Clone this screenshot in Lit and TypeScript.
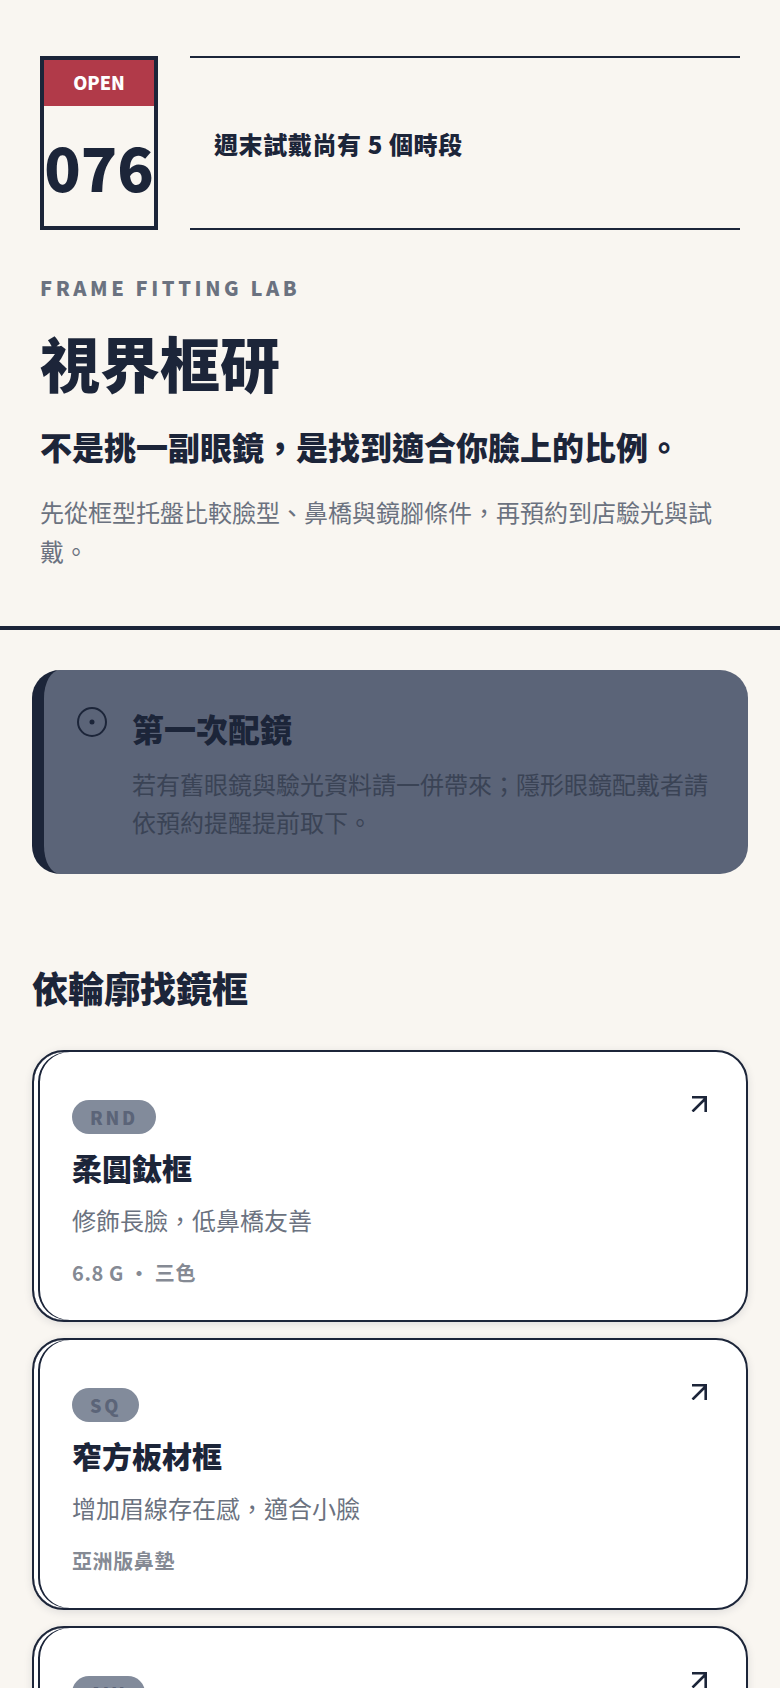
import { LitElement, html, css, svg } from "lit";
import { customElement } from "lit/decorators.js";

const frames = [
  { code: "RND", name: "柔圓鈦框", desc: "修飾長臉，低鼻橋友善", meta: "6.8 G ・ 三色" },
  { code: "SQ", name: "窄方板材框", desc: "增加眉線存在感，適合小臉", meta: "亞洲版鼻墊" },
  { code: "AVI", name: "飛行員細框", desc: "拉寬上庭比例，適合菱形臉", meta: "可調鼻托" },
];

const arrow = svg`<path d="M1.5 15.5 L14.5 2.5 M1 1.3 H14.7 V16" />`;

@customElement("app-root")
export class AppRoot extends LitElement {
  static styles = css`
    :host {
      display: block;
      height: 1688px;
      overflow: hidden;
      background: #f9f6f1;
      color: #1c2539;
      font-family: "Noto Sans CJK TC", "Noto Sans", sans-serif;
    }
    .hero {
      padding: 56px 40px 56px;
      border-bottom: 4px solid #1c2539;
    }
    .top {
      display: flex;
      gap: 32px;
      margin-bottom: 44px;
    }
    .ticket {
      flex: none;
      box-sizing: border-box;
      width: 118px;
      height: 174px;
      border: 4px solid #1c2539;
      display: flex;
      flex-direction: column;
    }
    .open {
      box-sizing: border-box;
      background: #b13a49;
      color: #fff;
      height: 46px;
      padding-bottom: 2px;
      display: flex;
      align-items: center;
      justify-content: center;
      font-size: 18px;
      font-weight: 900;
    }
    .num {
      flex: 1;
      display: flex;
      align-items: center;
      justify-content: center;
      font-size: 60px;
      font-weight: 900;
      line-height: 1;
    }
    .status {
      flex: 1;
      border-top: 2px solid #1c2539;
      border-bottom: 2px solid #1c2539;
      display: flex;
      align-items: center;
      padding: 0 24px;
      font-size: 24px;
      font-weight: 900;
      letter-spacing: 0.6px;
    }
    .eyebrow {
      font-size: 20px;
      font-weight: 900;
      letter-spacing: 3.6px;
      line-height: 28px;
      color: #6b7280;
    }
    h1 {
      margin: 20px 0 0;
      font-size: 60px;
      line-height: 80px;
      font-weight: 900;
    }
    h2 {
      margin: 22px 0 0;
      font-size: 32px;
      line-height: 44px;
      font-weight: 900;
    }
    .lead {
      margin: 24px 0 0;
      font-size: 24px;
      line-height: 39px;
      color: #6b7280;
    }
    main {
      padding: 40px 32px;
    }
    .notice {
      display: flex;
      gap: 24px;
      padding: 32px 36px 32px 32px;
      background: #5b6478;
      border-left: 12px solid #1c2539;
      border-radius: 28px;
    }
    .notice svg {
      flex: none;
      width: 32px;
      height: 32px;
      margin-top: 4px;
      fill: none;
      stroke: #1c2539;
      stroke-width: 2;
    }
    .notice h3 {
      margin: 2px 0 13px;
      font-size: 32px;
      line-height: 48px;
      font-weight: 900;
    }
    .notice p {
      margin: 0;
      font-size: 24px;
      line-height: 38.4px;
      color: #3a4355;
    }
    .section-title {
      margin: 87px 0 37px;
      font-size: 36px;
      line-height: 52px;
      font-weight: 900;
    }
    .cards {
      display: flex;
      flex-direction: column;
      gap: 16px;
    }
    .card {
      position: relative;
      box-sizing: border-box;
      height: 272px;
      padding: 48px 38px 0;
      background: #fff;
      border: 2px solid #1c2539;
      border-radius: 32px;
      box-shadow: inset 4px 0 0 #fff, inset 6px 0 0 #1c2539,
        0 2px 8px rgba(28, 37, 57, 0.12);
    }
    .badge {
      display: inline-block;
      height: 34px;
      line-height: 34px;
      padding: 0 18px;
      border-radius: 17px;
      background: #828b9b;
      color: #5b6478;
      font-size: 18px;
      font-weight: 900;
      letter-spacing: 2.7px;
      vertical-align: top;
    }
    .arrow {
      position: absolute;
      top: 44px;
      right: 39px;
      width: 16px;
      height: 16px;
      fill: none;
      stroke: #1c2539;
      stroke-width: 2.6;
    }
    .card h4 {
      margin: 11px 0 0;
      font-size: 30px;
      line-height: 44px;
      font-weight: 900;
    }
    .desc {
      margin: 12px 0 0;
      font-size: 24px;
      line-height: 38px;
      color: #6b7280;
    }
    .meta {
      margin: 19px 0 0;
      font-size: 20px;
      line-height: 30px;
      font-weight: 700;
      letter-spacing: 0.6px;
      color: #858a94;
    }
  `;

  render() {
    return html`
      <header class="hero">
        <div class="top">
          <div class="ticket">
            <div class="open">OPEN</div>
            <div class="num">076</div>
          </div>
          <div class="status">週末試戴尚有 5 個時段</div>
        </div>
        <div class="eyebrow">FRAME FITTING LAB</div>
        <h1>視界框研</h1>
        <h2>不是挑一副眼鏡，是找到適合你臉上的比例。</h2>
        <p class="lead">先從框型托盤比較臉型、鼻橋與鏡腳條件，再預約到店驗光與試戴。</p>
      </header>
      <main>
        <section class="notice">
          <svg viewBox="0 0 32 32">
            <circle cx="16" cy="16" r="14" />
            <circle cx="16" cy="16" r="1.5" fill="#1c2539" />
          </svg>
          <div>
            <h3>第一次配鏡</h3>
            <p>若有舊眼鏡與驗光資料請一併帶來；隱形眼鏡配戴者請依預約提醒提前取下。</p>
          </div>
        </section>
        <div class="section-title">依輪廓找鏡框</div>
        <div class="cards">
          ${frames.map(
            (f) => html`
              <article class="card">
                <svg class="arrow" viewBox="0 0 16 16">${arrow}</svg>
                <span class="badge">${f.code}</span>
                <h4>${f.name}</h4>
                <p class="desc">${f.desc}</p>
                <p class="meta">${f.meta}</p>
              </article>
            `
          )}
        </div>
      </main>
    `;
  }
}
